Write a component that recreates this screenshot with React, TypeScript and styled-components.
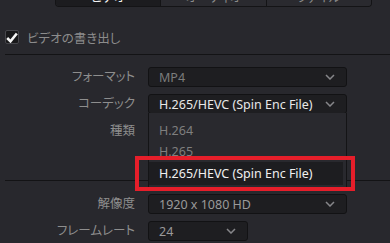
import styled, { createGlobalStyle } from "styled-components";

const GlobalStyle = createGlobalStyle`
  body {
    margin: 0;
    background: #28282d;
  }
`;

const Page = styled.div`
  position: relative;
  width: 390px;
  height: 243px;
  overflow: hidden;
  background: #28282d;
  font-family: "Noto Sans", "Noto Sans CJK JP", sans-serif;
  font-feature-settings: "palt";
`;

const TabBar = styled.div`
  display: flex;
  width: 317px;
  height: 20px;
  margin: -13px 0 0 55px;
  box-sizing: border-box;
  border: 1px solid #141416;
  border-top: none;
  border-radius: 0 0 4px 4px;
  overflow: hidden;
`;

const Tab = styled.div<{ $active?: boolean }>`
  flex: 1;
  display: flex;
  align-items: center;
  justify-content: center;
  background: ${({ $active }) => ($active ? "#1c1c1f" : "#2a2a2f")};
  color: ${({ $active }) => ($active ? "#f2f2f2" : "#8a8a8a")};
  font-size: 12.5px;

  & + & {
    border-left: 1px solid #141416;
  }
`;

const CheckRow = styled.div`
  display: flex;
  align-items: center;
  gap: 8px;
  height: 14px;
  margin-top: 23px;
  padding-left: 5px;
  color: #8c8c8c;
  font-size: 12.5px;
`;

const CheckBox = styled.div`
  display: flex;
  align-items: center;
  justify-content: center;
  width: 14px;
  height: 14px;
  box-sizing: border-box;
  border: 1px solid #46464b;
  border-radius: 2px;
  background: #18181a;
`;

const Separator = styled.div<{ $top: number }>`
  height: 1px;
  margin: ${({ $top }) => $top}px 0 0 5px;
  background: #131315;
`;

const Form = styled.div<{ $top: number }>`
  display: grid;
  grid-template-columns: 135px auto;
  column-gap: 13px;
  row-gap: 7px;
  align-items: center;
  margin-top: ${({ $top }) => $top}px;
`;

const Label = styled.div`
  text-align: right;
  color: #8e8e8e;
  font-size: 12.5px;
  line-height: 20px;
`;

const Select = styled.div<{ $width?: number; $tone?: string }>`
  display: flex;
  align-items: center;
  justify-content: space-between;
  width: ${({ $width }) => $width ?? 199}px;
  height: 20px;
  box-sizing: border-box;
  padding: 0 11px 0 10px;
  border: 1px solid #121214;
  border-radius: 3px;
  background: #1e1e21;
  color: ${({ $tone }) => $tone ?? "#9a9a9a"};
  font-size: 12.5px;
`;

const List = styled.div`
  position: absolute;
  left: 148px;
  top: 113px;
  width: 199px;
  height: 75px;
  box-sizing: border-box;
  padding-top: 7px;
  border: 1px solid #141416;
  border-top: none;
  background: #29292e;
`;

const Item = styled.div<{ $selected?: boolean }>`
  display: flex;
  align-items: center;
  height: ${({ $selected }) => ($selected ? 23 : 21)}px;
  margin-right: ${({ $selected }) => ($selected ? 3 : 0)}px;
  padding-left: 10px;
  background: ${({ $selected }) => ($selected ? "#1d1d20" : "transparent")};
  color: ${({ $selected }) => ($selected ? "#f0f0f0" : "#7f7f7f")};
  font-size: 12.5px;
`;

const Highlight = styled.div`
  position: absolute;
  left: 135px;
  top: 156px;
  width: 220px;
  height: 35px;
  box-sizing: border-box;
  border: 4px solid #e61e2a;
`;

function Chevron() {
  return (
    <svg width="10" height="6" viewBox="0 0 10 6">
      <path d="M1 1 L5 5 L9 1" fill="none" stroke="#86868a" strokeWidth="1.5" />
    </svg>
  );
}

function Check() {
  return (
    <svg width="12" height="11" viewBox="0 0 12 11">
      <path d="M1.2 6 L4.5 9.3 L10.8 1.5" fill="none" stroke="#f6f6f6" strokeWidth="2.6" />
    </svg>
  );
}

export default function App() {
  return (
    <Page>
      <GlobalStyle />
      <TabBar>
        <Tab $active>ビデオ</Tab>
        <Tab>オーディオ</Tab>
        <Tab>ファイル</Tab>
      </TabBar>

      <CheckRow>
        <CheckBox>
          <Check />
        </CheckBox>
        ビデオの書き出し
      </CheckRow>

      <Separator $top={10} />

      <Form $top={12}>
        <Label>フォーマット</Label>
        <Select $tone="#7c7c7c">
          MP4
          <Chevron />
        </Select>
        <Label>コーデック</Label>
        <Select $tone="#e8e8e8">
          H.265/HEVC (Spin Enc File)
          <Chevron />
        </Select>
        <Label>種類</Label>
        {/* covered by the open codec list */}
        <Select />
      </Form>

      <Separator $top={39} />

      <Form $top={13}>
        <Label>解像度</Label>
        <Select>
          1920 x 1080 HD
          <Chevron />
        </Select>
        <Label>フレームレート</Label>
        <Select $width={100}>
          24
          <Chevron />
        </Select>
      </Form>

      <List>
        <Item>H.264</Item>
        <Item>H.265</Item>
        <Item $selected>H.265/HEVC (Spin Enc File)</Item>
      </List>

      <Highlight />
    </Page>
  );
}
